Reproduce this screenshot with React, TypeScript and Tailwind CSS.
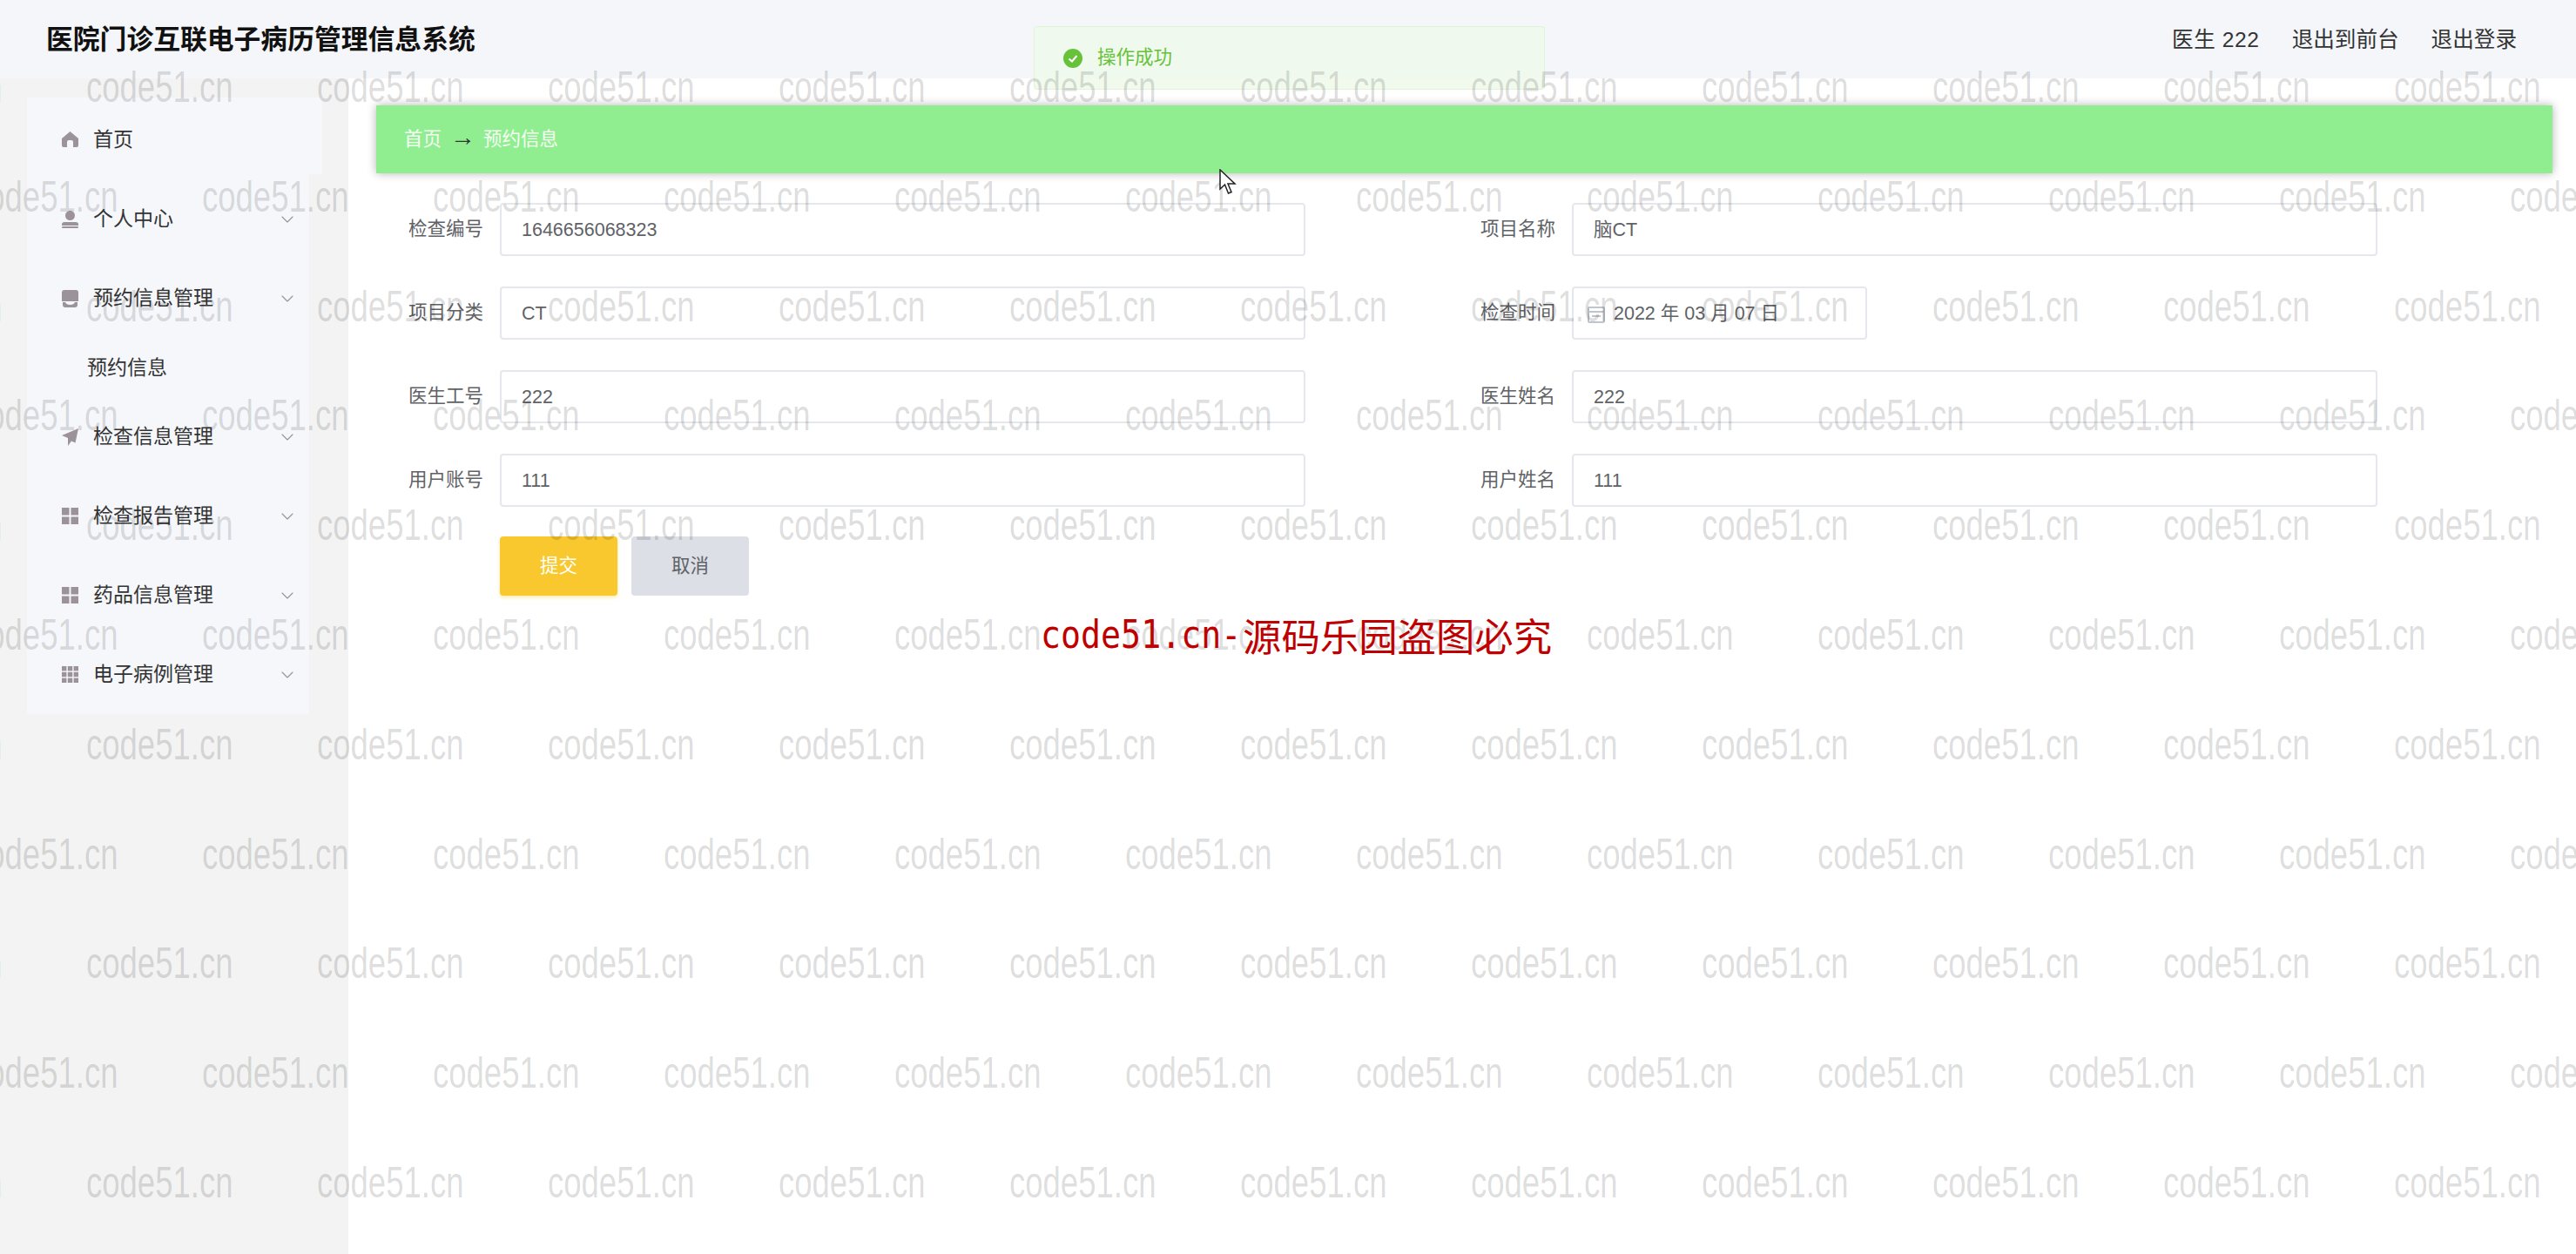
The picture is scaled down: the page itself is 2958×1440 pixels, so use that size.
import { ChevronDown } from "lucide-react";
import { ReactNode } from "react";

const HomeIcon = () => (
  <svg viewBox="0 0 19 18" className="h-[18px] w-[19px] fill-[#9c9299]">
    <path d="M9.500 0 L19 8 V16 Q19 18 17 18 H13 V12 Q13 10 11 10 H8 Q6 10 6 12 V18 H2 Q0 18 0 16 V8 Z" />
  </svg>
);

const UserIcon = () => (
  <svg viewBox="0 0 19 20" className="h-[20px] w-[19px] fill-[#9c9299]">
    <circle cx="9.500" cy="5.500" r="5.500" />
    <path d="M0 15.500 Q0 13 3 13 H16 Q19 13 19 15.500 V17 H0 Z" />
    <rect x="0" y="18" width="19" height="2" rx="1" />
  </svg>
);

const OrderIcon = () => (
  <svg viewBox="0 0 19 20" className="h-[20px] w-[19px] fill-[#9c9299]">
    <path d="M3 0 H16 Q19 0 19 3 V13 H0 V3 Q0 0 3 0 Z" />
    <path d="M1 14 H4 Q5 17 9.500 17 Q14 17 15 14 H18 V17 Q18 20 15 20 H4 Q1 20 1 17 Z" />
  </svg>
);

const PlaneIcon = () => (
  <svg viewBox="0 0 19 20" className="h-[20px] w-[19px] fill-[#9c9299]">
    <path d="M19 0 L0 8 L7 11 L7 20 L11 14.500 L15.500 16.500 Z" />
  </svg>
);

const GridIcon = () => (
  <svg viewBox="0 0 19 19" className="h-[19px] w-[19px] fill-[#9c9299]">
    <rect x="0" y="0" width="8.500" height="8.500" />
    <rect x="10.500" y="0" width="8.500" height="8.500" />
    <rect x="0" y="10.500" width="8.500" height="8.500" />
    <rect x="10.500" y="10.500" width="8.500" height="8.500" />
  </svg>
);

const DotsIcon = () => (
  <svg viewBox="0 0 19 19" className="h-[19px] w-[19px] fill-[#9c9299]">
    {[0, 6.800, 13.600].map((y) =>
      [0, 6.800, 13.600].map((x) => <rect key={`${x}-${y}`} x={x} y={y} width="5.400" height="5.400" />)
    )}
  </svg>
);

function MenuRow({ icon, label }: { icon: ReactNode; label: string }) {
  return (
    <div className="flex h-[91px] items-center pl-[40px] pr-[13px]">
      <span className="flex w-[36px] shrink-0 items-center">{icon}</span>
      <span className="flex-1 text-[23px] text-[#333333]">{label}</span>
      <ChevronDown className="h-[24px] w-[24px] text-[#909399]" strokeWidth={1.1} />
    </div>
  );
}

function Field({ label, value }: { label: string; value: string }) {
  return (
    <div className="flex items-center">
      <span className="w-[86px] shrink-0 whitespace-nowrap text-[21.500px] text-[#606266]">{label}</span>
      <div className="ml-[19px] flex h-[61px] flex-1 items-center rounded-[4px] border-2 border-[#e4e7ed] bg-white pl-[23px] pt-[2px] text-[21.500px] text-[#606266]">
        {value}
      </div>
    </div>
  );
}

const rows = [0, 1, 2, 3, 4, 5, 6, 7, 8, 9, 10];
const cols = [0, 1, 2, 3, 4, 5, 6, 7, 8, 9, 10, 11, 12];

function Watermarks() {
  return (
    <div className="pointer-events-none absolute inset-0 overflow-hidden pt-[37px]">
      {rows.map((r) => (
        <div key={r} className={r % 2 === 0 ? "-ml-[166px] flex h-[125.800px]" : "-ml-[33px] flex h-[125.800px]"}>
          {cols.map((c) => (
            <span key={c} className="w-[265px] shrink-0">
              <span className="block origin-left scale-x-[0.73] font-['Liberation_Sans',sans-serif] text-[50px] leading-[126px] text-black/[0.14]">
                code51.cn
              </span>
            </span>
          ))}
        </div>
      ))}
    </div>
  );
}

export default function App() {
  return (
    <div className="relative h-screen w-full overflow-hidden bg-white font-['Liberation_Sans','Noto_Sans_CJK_SC',sans-serif]">
      <header className="flex h-[90px] items-center justify-between bg-[#f4f6fa] pl-[53px] pr-[68px]">
        <div className="pt-[3px] text-[30.800px] font-bold text-[#111111]">医院门诊互联电子病历管理信息系统</div>
        <div className="flex gap-[37px] pt-[2px] text-[24.600px] text-[#333333]">
          <span className="tracking-[0.6px]">医生 222</span>
          <span>退出到前台</span>
          <span>退出登录</span>
        </div>
      </header>

      <div className="flex h-[1350px]">
        <aside className="w-[400px] shrink-0 bg-[#f3f3f3] pl-[31px] pt-[22px]">
          <div className="w-[324px] bg-[#f5f7fb]">
            <div className="mb-[6px] flex h-[88px] w-[339px] items-center bg-[#f5f7fb] pl-[40px] pt-[8px]">
              <span className="flex w-[36px] shrink-0 items-center">
                <HomeIcon />
              </span>
              <span className="text-[23px] text-[#333333]">首页</span>
            </div>
            <MenuRow icon={<UserIcon />} label="个人中心" />
            <MenuRow icon={<OrderIcon />} label="预约信息管理" />
            <div className="flex h-[68px] items-center pl-[69px] text-[23px] text-[#333333]">预约信息</div>
            <MenuRow icon={<PlaneIcon />} label="检查信息管理" />
            <MenuRow icon={<GridIcon />} label="检查报告管理" />
            <MenuRow icon={<GridIcon />} label="药品信息管理" />
            <MenuRow icon={<DotsIcon />} label="电子病例管理" />
          </div>
        </aside>

        <main className="flex-1 pl-[32px] pr-[27px] pt-[31px]">
          <div className="flex h-[78px] items-center bg-[#90ee90] pl-[32px] text-[21.500px] text-white/90 shadow-[0_0_10px_rgba(0,0,0,0.3)]">
            <span>首页</span>
            <span className="-mt-[5px] ml-[10px] mr-[9px] text-[29px] leading-none text-[#333333]">→</span>
            <span>预约信息</span>
          </div>

          <div className="ml-[37px] mt-[34px] w-[2261px]">
            <div className="grid grid-cols-[1030px_1030px] gap-x-[201px] gap-y-[35px]">
              <Field label="检查编号" value="1646656068323" />
              <Field label="项目名称" value="脑CT" />
              <Field label="项目分类" value="CT" />
              <div className="flex items-center">
                <span className="w-[86px] shrink-0 whitespace-nowrap text-[21.500px] text-[#606266]">检查时间</span>
                <div className="ml-[19px] flex h-[61px] w-[339px] items-center rounded-[4px] border-2 border-[#e4e7ed] bg-white pl-[16px] pt-[2px] text-[21.500px] text-[#606266]">
                  <svg viewBox="0 0 20 20" className="mr-[10px] h-[20px] w-[20px] fill-none stroke-[#c0c4cc] stroke-2">
                    <rect x="1" y="2" width="18" height="17" rx="1" />
                    <path d="M1 7 H19 M5 12 H15" />
                  </svg>
                  2022 年 03 月 07 日
                </div>
              </div>
              <Field label="医生工号" value="222" />
              <Field label="医生姓名" value="222" />
              <Field label="用户账号" value="111" />
              <Field label="用户姓名" value="111" />
            </div>
            <div className="ml-[105px] mt-[34px] flex gap-[16px] text-[21.500px]">
              <button className="h-[68px] w-[135px] rounded-[4px] bg-[#f8c82e] text-white shadow-[0_2px_4px_rgba(248,200,46,0.4)]">
                提交
              </button>
              <button className="h-[68px] w-[135px] rounded-[4px] bg-[#dcdfe6] text-[#606266]">取消</button>
            </div>
          </div>
        </main>
      </div>

      <div className="absolute left-[1187px] top-[30px] flex h-[73px] w-[587px] items-center rounded-[4px] border border-[#e1f3d8] bg-[#f0f9eb]/90 pl-[33px] text-[21.500px] text-[#67c23a]">
        <svg viewBox="0 0 22 22" className="mr-[17px] h-[22px] w-[22px]">
          <circle cx="11" cy="11" r="11" className="fill-[#67c23a]" />
          <path d="M6.500 11.500 L10 14.500 L15.500 8" className="fill-none stroke-white stroke-2" />
        </svg>
        操作成功
      </div>

      <Watermarks />

      <div className="absolute left-[1195px] top-[699px] flex h-[60px] items-center whitespace-nowrap text-[#c00000]">
        <span className="w-[232px]">
          <span className="block origin-left scale-x-[0.85] font-['DejaVu_Sans_Mono',monospace] text-[45px]">code51.cn-</span>
        </span>
        <span className="font-['Noto_Sans_CJK_SC',sans-serif] text-[44.400px]">源码乐园盗图必究</span>
      </div>

      <svg viewBox="0 0 20 30" className="absolute left-[1400px] top-[194px] h-[30px] w-[20px]">
        <path d="M1 1 V23 L6.500 18 L10.500 28 L14 26.500 L10 17 H18 Z" className="fill-white stroke-[#222222] stroke-[1.500]" />
      </svg>
    </div>
  );
}
